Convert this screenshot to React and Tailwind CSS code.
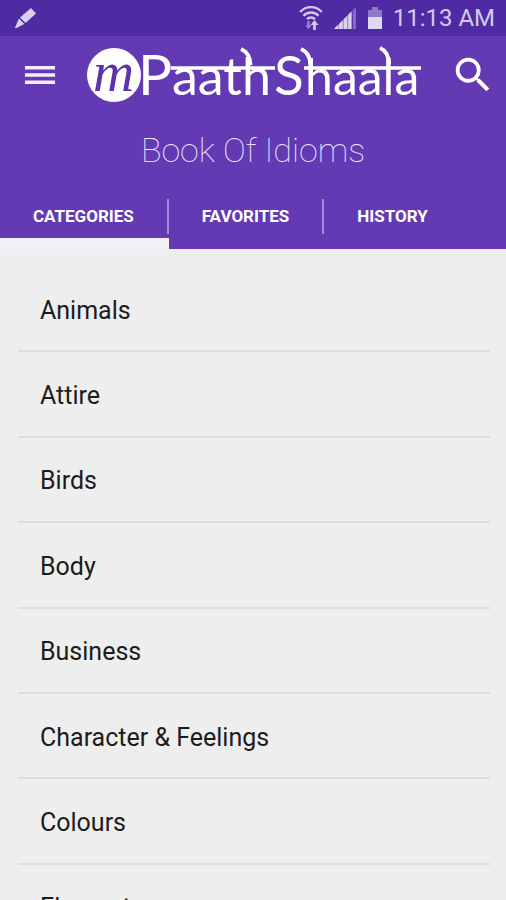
import React, { useState } from "react";
import { MdSearch } from "react-icons/md";

const tabs = [
  { id: "categories", label: "CATEGORIES" },
  { id: "favorites", label: "FAVORITES" },
  { id: "history", label: "HISTORY" },
];

const categories = [
  "Animals",
  "Attire",
  "Birds",
  "Body",
  "Business",
  "Character & Feelings",
  "Colours",
  "Elements",
];

const PencilIcon = () => (
  <svg width="24" height="24" viewBox="0 0 24 24" fill="#d9d0ee" aria-hidden="true">
    <path d="M17 2 22 7.500 11.500 17 6 11.500Z" />
    <path d="M5 12.500 10.300 18 2.500 22 .8 22Z" />
  </svg>
);

const WifiIcon = () => (
  <svg width="24" height="26" viewBox="0 0 24 26" fill="none" stroke="#d3c8ec" strokeWidth="2.4" aria-hidden="true">
    <path d="M1.2 7C7 .5 17 .5 22.8 7" />
    <path d="M4.5 10.800C8.500 6.400 15.500 6.400 19.500 10.800" />
    <path d="M8 14.300c2.200-2.400 5.800-2.400 8 0" />
    <path d="M9.500 16v5" stroke="#9683cc" strokeWidth="2.5" />
    <path d="M6.500 20h6l-3 4.500Z" fill="#9683cc" stroke="none" />
    <path d="M15.500 25v-6" strokeWidth="2.800" />
    <path d="M11.500 20l4-5 4 5Z" fill="#d3c8ec" stroke="none" />
  </svg>
);

const SignalIcon = () => (
  <svg width="24" height="24" viewBox="0 0 24 24" aria-hidden="true">
    <path d="M1 23 18.500 5.500V23Z" fill="#9c89d0" />
    <path d="M1 23 5.200 18.800V23ZM6.200 17.800l3.400-3.400V23H6.200ZM10.800 13.200l3.200-3.200v13h-3.200ZM15.200 8.800l3.300-3.300V23h-3.300Z" fill="#dcd3f1" />
    <path d="M19.800 4.200 23 1V23h-3.200Z" fill="#806bc0" />
  </svg>
);

const BatteryIcon = () => (
  <svg width="16" height="24" viewBox="0 0 16 24" aria-hidden="true">
    <path d="M5 1h6v3h4v7H1V4h4Z" fill="#8f7ac9" />
    <path d="M1 11h14v12H1Z" fill="#e0d8f3" />
  </svg>
);

const MenuIcon = () => (
  <svg width="30" height="20" viewBox="0 0 30 20" fill="#f3eefb" aria-hidden="true">
    <path d="M0 1h30v3.400H0ZM0 8.300h30v3.400H0ZM0 15.600h30V19H0Z" />
  </svg>
);

// Wordmark: letters hang from a headline bar like Devanagari script
const Logo = () => (
  <svg width="338" height="76" viewBox="0 -10 338 76" role="img" aria-label="mPaathShaala">
    <circle cx="27" cy="28" r="27" fill="#fff" />
    <text x="6" y="44" fontSize="57" fontStyle="italic" fill="#5b34ab" fontFamily="'Liberation Serif', serif">
      m
    </text>
    <g fill="#fff" fontFamily="Lato, sans-serif">
      <text x="51" y="48" fontSize="57">P</text>
      <text x="85" y="48" fontSize="52">aath</text>
      <text x="187" y="48" fontSize="55">S</text>
      <text x="218" y="48" fontSize="50">haala</text>
    </g>
    <g fill="none" stroke="#fff" strokeWidth="4">
      <path d="M84 21h104M217 21h117" strokeWidth="3.500" />
      <path d="M154 2c5 2 9 7 9.500 16" />
      <path d="M214 2c5 2 9 7 9.500 16" />
      <path d="M293 1c5 2 8.500 7 9 16" />
    </g>
  </svg>
);

const App = () => {
  const [activeTab, setActiveTab] = useState("categories");

  return (
    <div className="flex h-screen flex-col overflow-hidden bg-[#eeeeee] font-['Roboto',sans-serif]">
      <div className="flex h-9 shrink-0 items-center bg-[#4e2ba2] pl-3.5 pr-[11px]">
        <PencilIcon />
        <div className="ml-auto flex items-center gap-2.5 text-2xl text-[#d3c8ec]">
          <WifiIcon />
          <SignalIcon />
          <BatteryIcon />
          <span className="leading-9">11:13 AM</span>
        </div>
      </div>

      <header className="shrink-0 bg-[#633ab3]">
        <div className="flex h-[77px] items-center pl-[25px] pr-[10px]">
          <button type="button" aria-label="Menu">
            <MenuIcon />
          </button>
          <div className="ml-8">
            <Logo />
          </div>
          <button type="button" aria-label="Search" className="ml-auto text-white">
            <MdSearch size={46} />
          </button>
        </div>

        <h1 className="h-[75px] text-center text-[34px] leading-[75px] font-thin text-[#f3e8fd]">
          Book Of Idioms
        </h1>

        <nav className="flex h-[61px]" role="tablist">
          {tabs.map((tab, index) => (
            <button
              key={tab.id}
              type="button"
              role="tab"
              aria-selected={activeTab === tab.id}
              onClick={() => setActiveTab(tab.id)}
              className={`flex flex-col border-b-[11px] pt-[11px] text-[17px] font-bold text-white ${
                activeTab === tab.id ? "border-[#f1f1f6]" : "border-transparent"
              }`}
            >
              <span
                className={`px-[33px] leading-[35px] ${
                  index < tabs.length - 1 ? "border-r-2 border-[#a78bd8]" : ""
                }`}
              >
                {tab.label}
              </span>
            </button>
          ))}
        </nav>
      </header>

      <main className="min-h-0 flex-1 overflow-hidden pt-[18px] pr-4 pl-[18px]">
        <ul className="grid h-[683px] grid-rows-8">
          {categories.map((category) => (
            <li key={category} className="flex border-b-2 border-[#dddddd]">
              <a href="#" className="flex flex-1 items-center px-[22px] pt-1 text-[25px] leading-8 text-[#1c1c1c]">
                {category}
              </a>
            </li>
          ))}
        </ul>
      </main>
    </div>
  );
};

export default App;
